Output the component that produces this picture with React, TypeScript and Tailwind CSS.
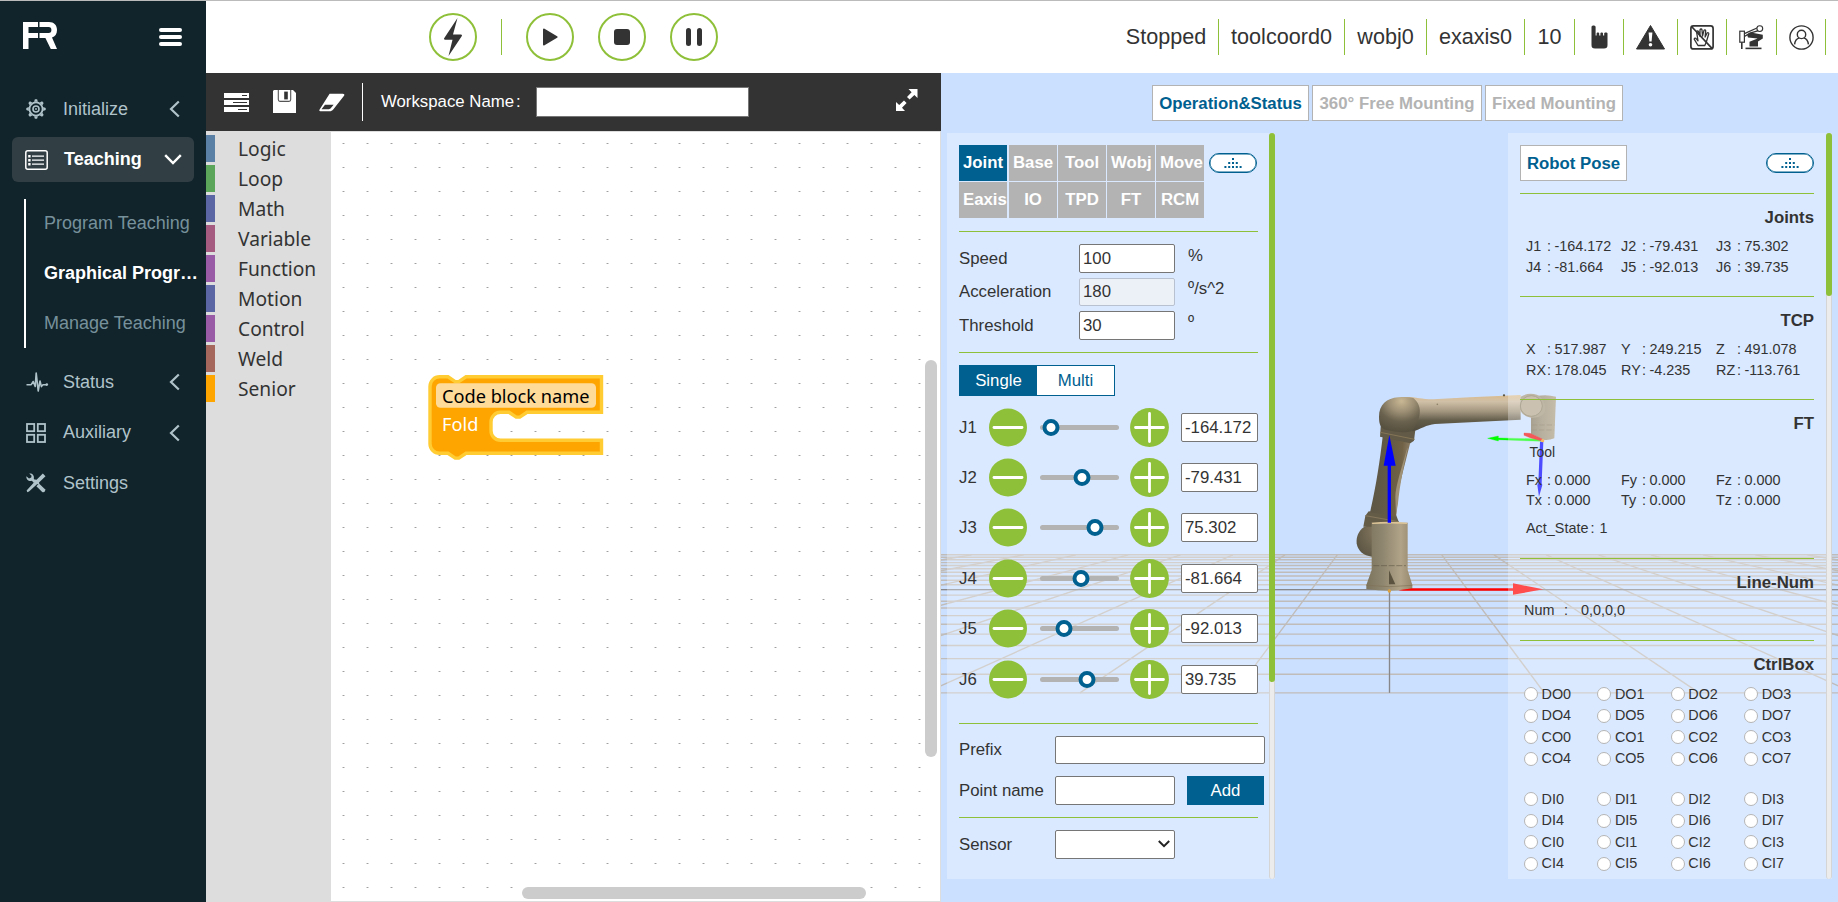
import React from "react";

const ARIAL = "font-['Liberation_Sans',Arial,sans-serif]";

/* ---------- sidebar ---------- */

function GearIcon() {
  const teeth = [0, 45, 90, 135, 180, 225, 270, 315];
  return (
    <svg width="20" height="20" viewBox="0 0 20 20" fill="none" stroke="#b0c3ca">
      <circle cx="10" cy="10" r="6.6" strokeWidth="1.8" />
      <circle cx="10" cy="10" r="3" strokeWidth="1.6" />
      <circle cx="10" cy="10" r="0.9" fill="#b0c3ca" stroke="none" />
      {teeth.map((a) => (
        <path key={a} d="M8.1 2.8 L8.9 0.3 H11.1 L11.9 2.8 Z" fill="#b0c3ca" stroke="none" transform={`rotate(${a} 10 10)`} />
      ))}
    </svg>
  );
}

function ListIcon() {
  return (
    <svg width="23" height="20" viewBox="0 0 23 20" fill="none" stroke="#fff">
      <rect x="0.8" y="0.8" width="21.4" height="18.4" rx="2" strokeWidth="1.5" />
      <path d="M7 6.2H19M7 10.2H19M7 14.2H19" strokeWidth="1.2" />
      <path d="M3.2 6.2H5.6M3.2 10.2H5.6M3.2 14.2H5.6" strokeWidth="2.4" />
    </svg>
  );
}

function PulseIcon() {
  return (
    <svg width="23" height="20" viewBox="0 0 23 20" fill="none" stroke="#b0c3ca" strokeWidth="1.6" strokeLinejoin="round">
      <path d="M0.5 12.7H5.2L7.2 9.5L9.2 14.5L10.2 1L12.2 19L14 9L15.4 14.6L17 12.7H21" />
      <circle cx="20.8" cy="12.6" r="1.3" fill="#b0c3ca" stroke="none" />
    </svg>
  );
}

function GridIcon() {
  return (
    <svg width="20" height="20" viewBox="0 0 20 20" fill="none" stroke="#b0c3ca" strokeWidth="1.8">
      <rect x="1" y="1" width="7.2" height="7.2" />
      <rect x="11.8" y="1" width="7.2" height="7.2" />
      <rect x="1" y="11.8" width="7.2" height="7.2" />
      <rect x="11.8" y="11.8" width="7.2" height="7.2" />
    </svg>
  );
}

function ToolsIcon() {
  return (
    <svg width="20" height="20" viewBox="0 0 20 20" fill="#b0c3ca">
      <path d="M19.5 3.2L16.8 0.5L10.6 6.8L8.8 6.6L8.6 8.8L0.6 17.6L1.4 19.2L3 18.6L11 11.2L13.2 11L13 9.4Z" />
      <path d="M3.2 0.5C6 0 8.6 2 7.8 5.8L10 8L8 10L5.8 7.8C3 8.6 0 6.8 0.4 3.2L3 5.6L5.2 4.6L5.6 2.8Z" />
      <path d="M10.4 13.2L13 10.6L19 16.2C20 18 18 20 16.2 19Z" />
    </svg>
  );
}

function ChevronLeft() {
  return (
    <svg width="11" height="18" viewBox="0 0 11 18" fill="none" stroke="#b0c3ca" strokeWidth="2.2">
      <path d="M9.8 1.5L2 9L9.8 16.5" />
    </svg>
  );
}

function ChevronDown() {
  return (
    <svg width="18" height="11" viewBox="0 0 18 11" fill="none" stroke="#fff" strokeWidth="2.4">
      <path d="M1.2 1.2L9 9L16.8 1.2" />
    </svg>
  );
}

function NavRow({ icon, label, arrow }: { icon: React.ReactNode; label: string; arrow?: boolean }) {
  return (
    <div className="mb-[5.5px] flex h-[45px] items-center pl-[25px] pr-[26px] text-[18px] text-[#b0c3ca]">
      <span className="flex w-[38px] pl-px">{icon}</span>
      <span className="flex-1">{label}</span>
      {arrow && <ChevronLeft />}
    </div>
  );
}

function Sidebar() {
  return (
    <aside className="flex w-[206px] shrink-0 flex-col overflow-hidden bg-[#11242b]">
      <div className="flex h-[85.5px] items-start justify-between pl-[23px] pr-6 pt-[21px]">
        <svg width="34" height="27" viewBox="0 0 34 27" fill="#fff">
          <path d="M0 0H15V5H5.5V11H15V16H5.5V27H0Z" />
          <path d="M16.5 0H26C31 0 34 3 34 8C34 12 32 14.6 29 15.6L34 27H27.8L22.4 16H16.5V11H25.6C27.6 11 28.4 10 28.4 8C28.4 6 27.6 5 25.6 5H16.5Z" />
        </svg>
        <div className="mt-[6px] flex flex-col gap-[3px]">
          <span className="h-1 w-[23px] rounded-xs bg-white" />
          <span className="h-1 w-[23px] rounded-xs bg-white" />
          <span className="h-1 w-[23px] rounded-xs bg-white" />
        </div>
      </div>
      <NavRow icon={<GearIcon />} label="Initialize" arrow />
      <div className="mx-3 flex h-[45px] items-center rounded-md bg-[#313f44] pl-[13px] pr-3 text-[18px] font-bold text-white">
        <span className="w-[39px]"><ListIcon /></span>
        <span className="flex-1">Teaching</span>
        <ChevronDown />
      </div>
      <div className="mb-[11.5px] ml-6 mt-[17px] flex h-[149px] flex-col border-l-2 border-white pl-[18px] text-[18px] text-[#77919b]">
        <div className="flex flex-1 items-center whitespace-nowrap">Program Teaching</div>
        <div className="flex flex-1 items-center whitespace-nowrap font-bold text-white">Graphical Progr…</div>
        <div className="flex flex-1 items-center whitespace-nowrap">Manage Teaching</div>
      </div>
      <NavRow icon={<PulseIcon />} label="Status" arrow />
      <NavRow icon={<GridIcon />} label="Auxiliary" arrow />
      <NavRow icon={<ToolsIcon />} label="Settings" />
    </aside>
  );
}

/* ---------- header ---------- */

function RoundButton({ children }: { children: React.ReactNode }) {
  return (
    <div className="flex size-12 items-center justify-center rounded-full border-2 border-[#8fc03a] text-[#333]">{children}</div>
  );
}

function Cell({ w, children }: { w: string; children: React.ReactNode }) {
  return <div className={`flex h-9 items-center justify-center border-r border-[#8fc03a] ${w}`}>{children}</div>;
}

function Header() {
  return (
    <header className="flex h-[72px] items-center bg-white pl-[223px] pr-3">
      <RoundButton>
        <svg width="20" height="38" viewBox="0 0 20 38" fill="#333">
          <path d="M14.5 0L1 20.5C1 21.5 1.6 21.8 2.6 21.8H9.5L5.5 38L19 17.8C19 16.8 18.4 16.5 17.4 16.5H10Z" />
        </svg>
      </RoundButton>
      <div className="ml-6 h-9 w-px bg-[#8fc03a]" />
      <div className="ml-6 flex gap-6">
        <RoundButton>
          <svg width="16" height="18" viewBox="0 0 16 18" fill="#333" stroke="#333" strokeWidth="2" strokeLinejoin="round">
            <path d="M2 1.6L14.6 9L2 16.4Z" />
          </svg>
        </RoundButton>
        <RoundButton><span className="size-4 rounded-[3px] bg-[#333]" /></RoundButton>
        <RoundButton>
          <span className="flex gap-[6px]">
            <span className="h-[18px] w-[5px] rounded-full bg-[#333]" />
            <span className="h-[18px] w-[5px] rounded-full bg-[#333]" />
          </span>
        </RoundButton>
      </div>
      <div className="ml-auto flex text-[21.6px] text-[#333]">
        <Cell w="w-[105px]">Stopped</Cell>
        <Cell w="w-[126px]">toolcoord0</Cell>
        <Cell w="w-[82px]">wobj0</Cell>
        <Cell w="w-[98px]">exaxis0</Cell>
        <Cell w="w-[50px]">10</Cell>
        <Cell w="w-[49px]">
          <svg width="17" height="24" viewBox="0 0 17 24" fill="#333">
            <path d="M0.5 2C0.5 0 4.6 0 4.6 2V10.5H5.6V8.2C5.6 7.2 8.2 7.2 8.2 8.2V10.5H9.4V8.2C9.4 7.2 12 7.2 12 8.2V10.5H13.2V8.2C13.2 7.2 16.5 7.2 16.5 8.2V20C16.5 22.6 15.4 23.5 13 23.5H4C1.6 23.5 0.5 22.6 0.5 20Z" />
          </svg>
        </Cell>
        <Cell w="w-[54px]">
          <svg width="29" height="25" viewBox="0 0 29 25" fill="#333">
            <path d="M14.5 0.5L28.5 24H0.5Z" stroke="#333" strokeLinejoin="round" />
            <path d="M12.6 7.5H16.4L15.6 16.5H13.4Z" fill="#fff" />
            <circle cx="14.5" cy="19.8" r="1.8" fill="#fff" />
          </svg>
        </Cell>
        <Cell w="w-[49px]">
          <svg width="24" height="25" viewBox="0 0 24 25" fill="none" stroke="#333" strokeWidth="1.3" strokeLinecap="round" strokeLinejoin="round">
            <rect x="0.9" y="0.9" width="22.2" height="23" rx="2.5" strokeWidth="1.7" />
            <path d="M8 20.5L4.2 14.2C4.2 12.8 5.6 12.8 6.4 13.8L8 15.8L6.6 6.8C6.8 5.6 8.2 5.6 8.5 6.8L10 11.4L10 4.8C10.3 3.7 11.8 3.7 12 4.8L12.5 11.2L14 5.4C14.6 4.4 15.8 4.8 15.7 6L15.1 12L17 8.2C17.8 7.2 19 7.8 18.7 9L16.4 16.8L14.8 20.5Z" />
            <path d="M2 2L22 23.4" strokeWidth="1.7" />
          </svg>
        </Cell>
        <Cell w="w-[50px]">
          <svg width="25" height="25" viewBox="0 0 25 25" fill="none" stroke="#333">
            <rect x="0.8" y="6.2" width="4.6" height="11" strokeWidth="1.2" />
            <path d="M2.8 17.2V24" strokeWidth="1.6" />
            <path d="M5.4 8.6L18.5 2.8" strokeWidth="1.2" />
            <path d="M5.4 11.5L11 8.2L19.5 5.6" strokeWidth="1.4" />
            <circle cx="20.8" cy="3.6" r="2.9" strokeWidth="1.1" fill="#fff" />
            <path d="M8 9.6L12 7.6L23.8 9.8V13.4L19 16.4V21.4H10.5V16.8L13 15.8L18.6 13.4L9 12.4Z" fill="#333" stroke="none" />
            <path d="M6.5 23.4H22.5" strokeWidth="1.6" />
          </svg>
        </Cell>
        <Cell w="w-[49px]">
          <svg width="25" height="25" viewBox="0 0 25 25" fill="none" stroke="#333" strokeWidth="1.4">
            <circle cx="12.5" cy="12.5" r="11.6" />
            <circle cx="12.5" cy="9.4" r="4.2" />
            <path d="M5.6 19.4C6 15.6 8.4 13.4 10.4 12.9M14.6 12.9C16.8 13.4 19 15.6 19.4 19.4" />
          </svg>
        </Cell>
      </div>
    </header>
  );
}

/* ---------- blockly workspace ---------- */

const categories = [
  ["Logic", "bg-[#5b80a5]"],
  ["Loop", "bg-[#5ba55b]"],
  ["Math", "bg-[#5b67a5]"],
  ["Variable", "bg-[#a55b80]"],
  ["Function", "bg-[#995ba5]"],
  ["Motion", "bg-[#5b67a5]"],
  ["Control", "bg-[#995ba5]"],
  ["Weld", "bg-[#a5675b]"],
  ["Senior", "bg-[#ffa500]"],
];

function Toolbar() {
  return (
    <div className="flex h-[58px] items-center bg-[#333] pl-[18px] pr-[23px] text-[16.8px] text-white">
      <svg width="25" height="19" viewBox="0 0 25 19">
        <path d="M0 0H25V5H0ZM0 7H25V12H0ZM0 14H25V19H0Z" fill="#fff" />
        <path d="M18 2.5H23M9 9.5H23M14 16.5H23" stroke="#333" strokeWidth="1.2" />
      </svg>
      <svg className="-mt-0.5 ml-6" width="23" height="23" viewBox="0 0 23 23">
        <path d="M1 0H20L23 3V23H0V1Z" fill="#fff" />
        <path d="M5.3 0V9.5C5.3 11 6 11.4 7 11.4H16C17 11.4 17.7 11 17.7 9.5V0" fill="none" stroke="#555" strokeWidth="1.1" />
        <rect x="11.2" y="1.6" width="3.6" height="7.8" fill="#333" />
      </svg>
      <svg className="ml-[23px]" width="26" height="19" viewBox="0 0 27 19">
        <path d="M11 0.5H24.6C26.4 0.5 26.8 1.6 26 2.6L15 16.4C13.6 18 12.6 18.5 11 18.5H1.4C0.2 18.5 0 17.6 0.8 16.6Z" fill="#fff" />
        <path d="M6.2 11.8H15.2L12.4 15.2C11.8 16 11.2 16.4 10.2 16.4H2.6Z" fill="#333" />
      </svg>
      <div className="ml-[17px] h-[38px] w-px bg-white" />
      <span className="ml-[18px] flex">Workspace Name<span className="ml-[2px]">:</span></span>
      <div className="ml-[15px] h-[30px] w-[213px] border border-[#767676] bg-white" />
      <svg className="ml-auto -mt-1" width="22" height="22" viewBox="0 0 22 22" fill="#fff">
        <path d="M12.5 0H21.5V9L18.4 6L13.6 10.6L11 8L15.6 3.2Z" />
        <path d="M9 22H0V13L3.2 16L8 11.4L10.6 14L6 18.8Z" />
      </svg>
    </div>
  );
}

function CodeBlock() {
  return (
    <svg className="absolute left-[97px] top-[242px]" width="178" height="88" viewBox="428 374 178 88">
      <path
        d="M430,386.4a9.6,9.6 0 0 1 9.6,-9.6H448l7.2,4.8h3.6l7.2,-4.8H601.5V412.3H527l-7.2,4.8h-3.6l-7.2,-4.8h-8.4a9.6,9.6 0 0 0 -9.6,9.6V430.7a9.6,9.6 0 0 0 9.6,9.6H601.5V453.3H466l-7.2,4.8h-3.6l-7.2,-4.8h-8.4a9.6,9.6 0 0 1 -9.6,-9.6Z"
        fill="#ffa500"
        stroke="#fc3"
        strokeWidth="3.4"
      />
      <rect x="436" y="383.3" width="160" height="24.4" rx="4.5" fill="#ffdb99" />
      <text x="442" y="402.6" fontSize="18.2" fill="#000" fontFamily="'Noto Sans', sans-serif">Code block name</text>
      <text x="442" y="431" fontSize="18.2" fill="#fff" fontFamily="'Noto Sans', sans-serif">Fold</text>
    </svg>
  );
}

function Workspace() {
  return (
    <section className="flex w-[735px] shrink-0 flex-col">
      <Toolbar />
      <div className="flex min-h-0 flex-1">
        <div className="w-[125px] bg-[#ddd] pt-1 font-['Noto_Sans',sans-serif] text-[19.2px] text-[#333]">
          {categories.map(([name, color]) => (
            <div key={name} className="mb-[3px] flex h-[27px] items-center">
              <span className={`mr-[23px] h-full w-[9px] ${color}`} />
              <span className="relative top-px">{name}</span>
            </div>
          ))}
        </div>
        <div className="relative flex-1 overflow-hidden border border-l-0 border-[#ddd] bg-white">
          <svg className="block h-full w-full">
            <defs>
              <pattern id="dots" x="0" y="0" width="24" height="24" patternUnits="userSpaceOnUse">
                <rect x="11" y="11" width="3" height="1" fill="#d4d4d4" />
                <rect x="12" y="11" width="1" height="1" fill="#a0a0a0" />
              </pattern>
            </defs>
            <rect width="100%" height="100%" fill="url(#dots)" />
          </svg>
          <CodeBlock />
          <div className="absolute left-[594px] top-[228px] h-[397px] w-3 rounded-full bg-[#ccc]" />
          <div className="absolute left-[191px] top-[755px] h-3 w-[344px] rounded-full bg-[#ccc]" />
        </div>
      </div>
    </section>
  );
}

/* ---------- 3D scene ---------- */

const HORIZON = 484.5;
const CENTER_X = 1389.5;
const rows = Array.from({ length: 21 }, (_, n) => HORIZON + 1 / (0.0048 + 0.000471 * n));
const rays = Array.from({ length: 21 }, (_, n) => n - 10);

function Scene() {
  const near = rows[0];
  const far = rows[20];
  return (
    <svg className="absolute inset-0" width="897" height="829" viewBox="941 73 897 829">
      <defs>
        <linearGradient id="base" x1="0" x2="1" y1="0" y2="0">
          <stop offset="0" stopColor="#7d745e" />
          <stop offset="0.35" stopColor="#8f866f" />
          <stop offset="0.75" stopColor="#b0a388" />
          <stop offset="1" stopColor="#95876a" />
        </linearGradient>
        <linearGradient id="link" x1="0" x2="1" y1="0" y2="0.15">
          <stop offset="0" stopColor="#5b5543" />
          <stop offset="0.5" stopColor="#635a47" />
          <stop offset="0.8" stopColor="#716246" />
          <stop offset="1" stopColor="#8d8069" />
        </linearGradient>
        <linearGradient id="arm" x1="0" x2="0" y1="0" y2="1">
          <stop offset="0" stopColor="#dcbc8d" />
          <stop offset="0.18" stopColor="#d0c0a8" />
          <stop offset="0.45" stopColor="#a3967f" />
          <stop offset="0.7" stopColor="#625c4a" />
          <stop offset="1" stopColor="#4f4a3c" />
        </linearGradient>
        <linearGradient id="wrist" x1="0" x2="1" y1="0" y2="0">
          <stop offset="0" stopColor="#837861" />
          <stop offset="0.45" stopColor="#9a8f77" />
          <stop offset="1" stopColor="#ac9e83" />
        </linearGradient>
        <radialGradient id="elbow" cx="0.55" cy="0.12" r="0.9">
          <stop offset="0" stopColor="#cab894" />
          <stop offset="0.35" stopColor="#9b8e74" />
          <stop offset="0.65" stopColor="#6a624e" />
          <stop offset="1" stopColor="#544e3e" />
        </radialGradient>
        <radialGradient id="shoulder" cx="0.7" cy="0.3" r="0.8">
          <stop offset="0" stopColor="#857960" />
          <stop offset="1" stopColor="#5c5543" />
        </radialGradient>
      </defs>
      <g stroke="#c0bcb9" strokeWidth="1.4">
        {rows.map((y) => (
          <line key={y} x1="941" x2="1838" y1={y} y2={y} />
        ))}
        {rays.map((k) => (
          <line
            key={k}
            x1={CENTER_X + k * 0.743 * (far - HORIZON)}
            y1={far}
            x2={CENTER_X + k * 0.743 * (near - HORIZON)}
            y2={near}
          />
        ))}
      </g>
      <g stroke="#85878c" strokeWidth="1.2">
        <line x1="941" x2="1838" y1="589.6" y2="589.6" />
        <line x1={CENTER_X} x2={CENTER_X} y1="589" y2={near} />
      </g>
      <g transform="translate(1270 370) scale(0.33333)">
        {/* shoulder */}
        <path d="M283 470C266 482 258 500 260 520C263 542 280 558 306 560L345 560V450Z" fill="url(#shoulder)" />
        <path d="M286 437L296 424L378 434L386 455V470H280Z" fill="#655c48" />
        <path d="M286 437L386 455" stroke="#86775b" strokeWidth="3" />
        {/* lower link */}
        <path d="M338 200L422 214C408 270 392 330 386 360L378 440L300 427C318 350 330 270 338 200Z" fill="url(#link)" />
        <path d="M410 240C396 290 376 350 376 380L378 436L384 400C390 340 403 280 414 232Z" fill="#9f9175" />
        {/* elbow collar */}
        <path d="M333 160L437 172L432 212L421 220L330 200Z" fill="#625a46" />
        <path d="M331 187L434 208" stroke="#857556" strokeWidth="3" fill="none" />
        {/* forearm */}
        <path d="M400 81C440 80 450 88 490 88L600 82L752 75V149L495 162C470 164 450 178 430 184L390 180Z" fill="url(#arm)" />
        <path d="M385 82C350 84 327 105 327 140C327 165 333 176 350 180C375 186 405 190 428 182C450 150 462 110 430 84C415 80 400 80 385 82Z" fill="url(#elbow)" />
        <circle cx="502" cy="103" r="2.5" fill="#8d8068" />
        <circle cx="702" cy="76" r="3.5" fill="#5c5440" />
        {/* wrist */}
        <path d="M800 78Q830 72 858 80L853 205Q835 212 820 209L783 192V140Z" fill="url(#wrist)" />
        <path d="M752 80C770 68 800 68 815 84C830 105 830 130 812 138C790 150 755 140 750 118Z" fill="#a4987f" />
        <ellipse cx="784" cy="108" rx="33" ry="31" fill="#b3a78e" stroke="#85795f" strokeWidth="2.5" />
        <path d="M786 165H853M785 180H852" stroke="#7a6e55" strokeWidth="1.6" strokeDasharray="16 6" />
        {/* base */}
        <path d="M305 458H413V600L427 645V657Q358 668 289 657V645L305 600Z" fill="url(#base)" />
        <path d="M305 458Q358 453 413 458L410 462Q358 459 307 462Z" fill="#dcc497" />
        <path d="M310 587H408" stroke="#574f3c" strokeWidth="1.6" strokeDasharray="18 5" />
        <path d="M357 601L376 643H357Z" fill="#5b533f" />
        <path d="M289 646Q358 654 427 646" stroke="#7e7358" strokeWidth="2" fill="none" />
        {/* world axes */}
        <path d="M385 661L428 655H730V662H400Z" fill="#f00" />
        <path d="M729 640L820 658L729 674Z" fill="#f00" />
        <path d="M353 458V287H341L358 195L377 287H363V458Z" fill="#00f" />
        <circle cx="358" cy="663" r="5" fill="#e0a23c" />
        {/* tool axes */}
        <path d="M815 214L685 209V213L653 205L685 198V204L815 207Z" fill="#0f0" stroke="#0f0" />
        <path d="M815 213L780 203L762 196V189L780 190L817 207Z" fill="#f01010" stroke="#f01010" />
        <path d="M810 215H820L815 340L817 345L807 380L802 345L805 340Z" fill="#00f" />
        <circle cx="818" cy="212" r="5" fill="#f59a1d" />
      </g>
    </svg>
  );
}

/* ---------- panels ---------- */

function PillButton() {
  return (
    <div className="flex h-5 w-12 items-center justify-center rounded-full border-[1.5px] border-[#00608f] bg-white ring-[0.5px] ring-inset ring-[#00608f]">
      <svg width="18" height="10" viewBox="0 0 18 10" fill="#00608f">
        <path d="M8 0h2v2h-2zM4.2 4h2v2h-2zM8 4h2v2h-2zM11.8 4h2v2h-2zM0.4 8h2v2h-2zM4.2 8h2v2h-2zM8 8h2v2h-2zM11.8 8h2v2h-2zM15.6 8h2v2h-2z" />
      </svg>
    </div>
  );
}

function Line({ className }: { className: string }) {
  return <div className={`h-px shrink-0 bg-[#8fc03a] ${className}`} />;
}

const tabs = ["Joint", "Base", "Tool", "Wobj", "Move", "Eaxis", "IO", "TPD", "FT", "RCM"];

const settings = [
  { label: "Speed", value: "100", unit: "%", off: false },
  { label: "Acceleration", value: "180", unit: "º/s^2", off: true },
  { label: "Threshold", value: "30", unit: "º", off: false },
];

const joints = [
  { name: "J1", value: "-164.172", pos: 10.3 },
  { name: "J2", value: "-79.431", pos: 41.3 },
  { name: "J3", value: "75.302", pos: 54.3 },
  { name: "J4", value: "-81.664", pos: 40.7 },
  { name: "J5", value: "-92.013", pos: 23.3 },
  { name: "J6", value: "39.735", pos: 46.3 },
];

function StepButton({ plus }: { plus?: boolean }) {
  return (
    <svg width={plus ? 39 : 38} height="39" viewBox={plus ? "0 0 39 39" : "0.5 0 38 39"}>
      <circle cx="19.5" cy="19.5" r={plus ? 19.4 : 19} fill="#8fc03a" />
      <path d={plus ? "M5.5 19.5H33.5M19.5 5.5V33.5" : "M5.5 19.5H33.5"} stroke="#fff" strokeWidth="2.8" strokeLinecap="round" />
    </svg>
  );
}

function OperationPanel() {
  return (
    <div className="flex h-[746px] w-[328px] justify-between bg-white/30">
      <div className="flex w-[318px] flex-col pl-3 pt-3 text-[16.8px] text-[#333]">
        <div className="flex">
          <div className="grid grid-cols-[50px_49px_49px_49px_49px] gap-y-px">
            {tabs.map((t, i) => (
              <div
                key={t}
                className={`h-9 w-12 whitespace-nowrap px-1 text-center font-bold leading-9 text-white ${
                  i === 0 ? "bg-[#00608f]" : "bg-[#b3b3b3]"
                }`}
              >
                {t}
              </div>
            ))}
          </div>
          <div className="ml-1 mt-2"><PillButton /></div>
        </div>
        <Line className="mr-[7px] mt-[13px]" />
        <div className="mt-3 flex flex-col gap-[5px]">
          {settings.map((s) => (
            <div key={s.label} className="flex h-[28.7px] items-center">
              <span className="w-[120px]">{s.label}</span>
              <span
                className={`flex h-full w-24 items-center rounded-xs border pl-[3px] ${
                  s.off ? "border-[#b8c1cf] bg-[#ecf1f8]" : "border-[#767676] bg-white"
                }`}
              >
                {s.value}
              </span>
              <span className="relative -top-[3px] ml-[13px]">{s.unit}</span>
            </div>
          ))}
        </div>
        <Line className="mr-[7px] mt-[11.9px]" />
        <div className="mt-3 flex h-[31px] w-[156px] border border-[#00608f] bg-white">
          <div className="flex w-[77px] items-center justify-center bg-[#00608f] text-white">Single</div>
          <div className="flex flex-1 items-center justify-center text-[#00608f]">Multi</div>
        </div>
        <div className="mt-[6px] flex flex-col">
          {joints.map((j) => (
            <div key={j.name} className="flex h-[50.4px] items-center">
              <span className="w-[30px]">{j.name}</span>
              <StepButton />
              <div className="relative ml-[13px] mr-[11px] h-[5px] w-[79px] rounded-full bg-[#b3b3b3]">
                <span
                  className="absolute top-[-6px] size-[17px] -translate-x-1/2 rounded-full border-[4px] border-[#00608f] bg-white"
                  style={{ left: j.pos + 0.5 }}
                />
              </div>
              <StepButton plus />
              <span className="ml-3 flex h-[29px] w-[77px] items-center rounded-xs border border-[#767676] bg-white pl-[3px]">{j.value}</span>
            </div>
          ))}
        </div>
        <Line className="mr-[7px] mt-[18.6px]" />
        <div className="mt-3 flex items-center">
          <span className="w-24">Prefix</span>
          <span className="h-7 w-[210px] rounded-xs border border-[#767676] bg-white" />
        </div>
        <div className="mt-3 flex items-center">
          <span className="w-24 whitespace-nowrap">Point name</span>
          <span className="h-[29px] w-[120px] rounded-xs border border-[#767676] bg-white" />
          <span className="ml-3 flex h-[29px] w-[77px] items-center justify-center bg-[#00608f] text-white">Add</span>
        </div>
        <Line className="mr-[7px] mt-3" />
        <div className="mt-3 flex items-center">
          <span className="w-24">Sensor</span>
          <span className="flex h-[29px] w-[120px] items-center justify-end rounded-xs border border-[#767676] bg-white pr-1">
            <svg width="12" height="8" viewBox="0 0 12 8" fill="none" stroke="#222" strokeWidth="2">
              <path d="M0.8 1L6 6.2L11.2 1" />
            </svg>
          </span>
        </div>
      </div>
      <div className="ml-1 w-1.5 shrink-0 rounded-full border-x border-[#d5d5d5] bg-[#ececec]">
        <div className="-mx-px h-[549px] rounded-full bg-[#8fc03a]" />
      </div>
    </div>
  );
}

function Title({ children }: { children: React.ReactNode }) {
  return <div className="mb-[-1px] mt-3 h-6 text-right text-[16.8px] font-bold leading-6">{children}</div>;
}

function Values({ items, className, rowClass }: { items: string[][]; className: string; rowClass: string }) {
  return (
    <div className={`grid grid-cols-[95px_95px_95px] pl-1.5 ${className}`}>
      {items.map(([k, v]) => (
        <div key={k} className={`flex items-center whitespace-nowrap ${rowClass}`}>
          <span className="w-[21px]">{k}</span>
          <span className="w-[7.5px]">:</span>
          <span>{v}</span>
        </div>
      ))}
    </div>
  );
}

function Radios({ prefixes, className }: { prefixes: string[]; className: string }) {
  const names = prefixes.flatMap((p) => Array.from({ length: 8 }, (_, i) => p + i));
  return (
    <div className={`grid grid-cols-[73.4px_73.4px_73.4px_73.4px] pl-1 ${className}`}>
      {names.map((n) => (
        <div key={n} className="flex h-[21.5px] items-center gap-[3.5px]">
          <span className="size-[14px] rounded-full border border-[#b5b5b5] bg-white" />
          <span className="pt-px">{n}</span>
        </div>
      ))}
    </div>
  );
}

function StatusPanel() {
  return (
    <div className="flex h-[746px] w-[324px] justify-between bg-white/30">
      <div className="flex w-[306px] flex-col pl-3 pt-3 text-[14.4px] text-[#333]">
        <div className="flex items-start justify-between">
          <div className="flex h-9 w-[107px] items-center justify-center border border-[#b3b3b3] bg-white pt-0.5 text-[16.8px] font-bold text-[#00608f]">
            Robot Pose
          </div>
          <div className="mt-2"><PillButton /></div>
        </div>
        <Line className="mt-3" />
        <Title>Joints</Title>
        <Values
          className="mt-[7px]"
          rowClass="h-[21px]"
          items={[["J1", "-164.172"], ["J2", "-79.431"], ["J3", "75.302"], ["J4", "-81.664"], ["J5", "-92.013"], ["J6", "39.735"]]}
        />
        <Line className="mt-[18px]" />
        <Title>TCP</Title>
        <Values
          className="mt-[7px]"
          rowClass="h-[21px]"
          items={[["X", "517.987"], ["Y", "249.215"], ["Z", "491.078"], ["RX", "178.045"], ["RY", "-4.235"], ["RZ", "-113.761"]]}
        />
        <Line className="mt-[18px]" />
        <Title>FT</Title>
        <Values
          className="mt-9"
          rowClass="h-5"
          items={[["Fx", "0.000"], ["Fy", "0.000"], ["Fz", "0.000"], ["Tx", "0.000"], ["Ty", "0.000"], ["Tz", "0.000"]]}
        />
        <div className="mt-2 flex h-5 items-center pl-1.5">
          <span>Act_State</span>
          <span className="ml-[2px] w-[9px]">:</span>
          <span>1</span>
        </div>
        <Line className="mt-[19px]" />
        <Title>Line-Num</Title>
        <div className="mt-[7px] flex h-5 items-center pl-1">
          <span className="w-[40px]">Num</span>
          <span className="w-[17px]">:</span>
          <span>0,0,0,0</span>
        </div>
        <Line className="mt-[19px]" />
        <Title>CtrlBox</Title>
        <Radios prefixes={["DO", "CO"]} className="mt-[7.5px]" />
        <Radios prefixes={["DI", "CI"]} className="mt-[19px]" />
      </div>
      <div className="w-1.5 shrink-0 rounded-full border-x border-[#d5d5d5] bg-[#ececec]">
        <div className="-mx-px h-[163px] rounded-full bg-[#8fc03a]" />
      </div>
    </div>
  );
}

function RobotView() {
  return (
    <section className="relative flex-1 overflow-hidden bg-[#cbe0ff]">
      <Scene />
      <div className="relative flex h-full flex-col">
        <div className="flex gap-[3px] pl-[211px] pt-3 text-[16.8px] font-bold text-[#b3b3b3]">
          <div className="flex h-9 w-[157px] items-center justify-center border border-[#b3b3b3] bg-white pt-0.5 text-[#00608f]">Operation&amp;Status</div>
          <div className="flex h-9 w-[170px] items-center justify-center whitespace-nowrap border border-[#b3b3b3] bg-white pt-0.5">360° Free Mounting</div>
          <div className="flex h-9 w-[138px] items-center justify-center border border-[#b3b3b3] bg-white pt-0.5">Fixed Mounting</div>
        </div>
        <div className="mt-3 flex justify-between px-1.5">
          <OperationPanel />
          <StatusPanel />
        </div>
      </div>
      <span className="absolute left-[588.5px] top-[371px] text-[14px] leading-4 text-[#333]">Tool</span>
    </section>
  );
}

export default function App() {
  return (
    <div className={`flex h-[902px] w-[1838px] overflow-hidden border-t border-[#bbb] ${ARIAL} leading-normal`}>
      <Sidebar />
      <div className="flex min-w-0 flex-1 flex-col">
        <Header />
        <div className="flex min-h-0 flex-1">
          <Workspace />
          <RobotView />
        </div>
      </div>
    </div>
  );
}
